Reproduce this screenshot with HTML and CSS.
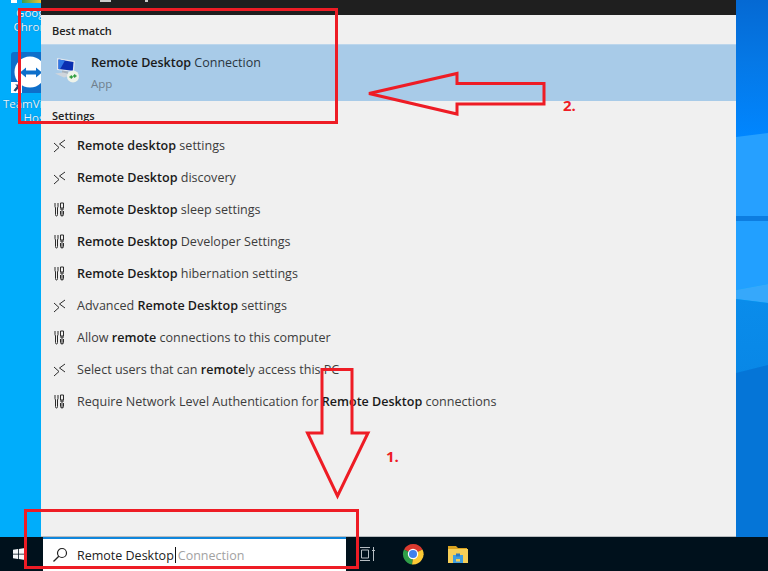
FILE: index.html
```html
<!DOCTYPE html>
<html lang="en">
<head>
<meta charset="utf-8">
<title>Remote Desktop search</title>
<link rel="stylesheet" href="styles.css">
</head>
<body>
<svg width="0" height="0" class="defs">
  <symbol id="ic-remote" viewBox="0 0 16 16">
    <path d="M2 6 L7 10.500 L2 15 M13 3 L7.500 7 L13 11" fill="none" stroke="#2b2b2b" stroke-width="1"/>
  </symbol>
  <symbol id="ic-tools" viewBox="0 0 16 16">
    <path d="M3 2 V5.500 L3.500 7 V13.500 Q3.500 15 4.500 15 Q5.500 15 5.500 13.500 V7 L6 5.500 V2" fill="none" stroke="#2b2b2b" stroke-width="1"/>
    <path d="M8.500 2 H11.500 V7 H8.500 Z M8 8 H12 M10 8 V15 M8.500 10 V13.500 Q8.500 15 10 15 Q11.500 15 11.500 13.500 V10" fill="none" stroke="#2b2b2b" stroke-width="1"/>
  </symbol>
</svg>

<div class="screen">
  <svg class="wallpaper" viewBox="0 0 768 571" preserveAspectRatio="none">
    <defs>
      <linearGradient id="wtop" x1="0" y1="0" x2="0" y2="1">
        <stop offset="0" stop-color="#0569d3"/>
        <stop offset="0.45" stop-color="#0578e6"/>
        <stop offset="1" stop-color="#0086ff"/>
      </linearGradient>
      <linearGradient id="wlow" x1="0" y1="0" x2="0" y2="1">
        <stop offset="0" stop-color="#0a8ceb"/>
        <stop offset="1" stop-color="#057ddc"/>
      </linearGradient>
    </defs>
    <rect width="768" height="571" fill="#00adfb"/>
    <rect x="736" width="32" height="137" fill="url(#wtop)"/>
    <polygon points="736,137 768,133 768,216 736,216" fill="#26a0ff"/>
    <rect x="736" y="216" width="32" height="5" fill="#0d7de0"/>
    <polygon points="736,221 768,221 768,284 736,290" fill="#22a0ff"/>
    <polygon points="736,290 768,284 768,303 736,299" fill="#36a8fb"/>
    <polygon points="736,299 768,303 768,537 736,537" fill="url(#wlow)"/>
    <polygon points="736,373 768,365 768,537 736,537" fill="#0575d7"/>
  </svg>

  <div class="desk-icon chrome-shortcut">
    <span class="chrome-tile"></span>
    <span class="chrome-sliver"></span>
    <span class="desk-label">Google<br>Chrome</span>
  </div>

  <div class="desk-icon tv-shortcut">
    <svg class="tv-icon" viewBox="0 0 40 41" width="40" height="41">
      <rect width="40" height="41" rx="3" fill="#0e6fca"/>
      <circle cx="19" cy="20" r="15.500" fill="#fff"/>
      <path d="M9 20.500 L15 15.500 V18.500 H25 V15.500 L31 20.500 L25 25.500 V22.500 H15 V25.500 Z" fill="#0e6fca"/>
      <rect x="0" y="30" width="11" height="11" fill="#fff"/>
      <path d="M2.500 38.500 L6 34 L4 32.500 H9.500 V38 L7.800 36 L4.500 39.500 Z" fill="#24456e"/>
    </svg>
    <span class="desk-label">TeamViewer<br>Host</span>
  </div>

  <main class="work">
    <section class="panel">
      <div class="panel-top">
        <span class="top-mark top-mark-a"></span>
        <span class="top-mark top-mark-b"></span>
      </div>
      <h2 class="heading heading-first">Best match</h2>
      <div class="best">
        <svg class="app-icon" viewBox="0 0 26 26" width="26" height="26">
          <polygon points="3,1 21,4 20,15 3,13" fill="#dfe6ee"/>
          <polygon points="4.500,2.500 19.500,5 18.800,13.800 4.500,12" fill="#0a2fb0"/>
          <polygon points="4.500,2.500 11,3.500 6,12.200 4.500,12" fill="#2f78e6"/>
          <polygon points="8,13.500 14,14.500 14,17 8,16" fill="#a9b3bd"/>
          <polygon points="1,16.500 9,15.500 18,18 10,20.500" fill="#cfd5dc"/>
          <circle cx="19" cy="19.500" r="6" fill="#eef3ea"/>
          <path d="M15.500 20 L18 20 M16.800 18.500 L18.300 20 L16.800 21.500 M22.500 19 L20 19 M21.200 17.500 L19.700 19 L21.200 20.500" fill="none" stroke="#2f9e3f" stroke-width="1.300"/>
        </svg>
        <div class="best-text">
          <div class="best-title"><b>Remote Desktop</b> Connection</div>
          <div class="best-sub">App</div>
        </div>
      </div>
      <h2 class="heading">Settings</h2>
      <ul class="results">
        <li class="row"><svg class="row-icon"><use href="#ic-remote"/></svg><span><b>Remote desktop</b> settings</span></li>
        <li class="row"><svg class="row-icon"><use href="#ic-remote"/></svg><span><b>Remote Desktop</b> discovery</span></li>
        <li class="row"><svg class="row-icon"><use href="#ic-tools"/></svg><span><b>Remote Desktop</b> sleep settings</span></li>
        <li class="row"><svg class="row-icon"><use href="#ic-tools"/></svg><span><b>Remote Desktop</b> Developer Settings</span></li>
        <li class="row"><svg class="row-icon"><use href="#ic-tools"/></svg><span><b>Remote Desktop</b> hibernation settings</span></li>
        <li class="row"><svg class="row-icon"><use href="#ic-remote"/></svg><span>Advanced <b>Remote Desktop</b> settings</span></li>
        <li class="row"><svg class="row-icon"><use href="#ic-tools"/></svg><span>Allow <b>remote</b> connections to this computer</span></li>
        <li class="row"><svg class="row-icon"><use href="#ic-remote"/></svg><span>Select users that can <b>remote</b>ly access this PC</span></li>
        <li class="row"><svg class="row-icon"><use href="#ic-tools"/></svg><span>Require Network Level Authentication for <b>Remote Desktop</b> connections</span></li>
      </ul>
    </section>
  </main>

  <footer class="taskbar">
    <div class="start">
      <svg viewBox="0 0 12 12" width="12" height="12">
        <path d="M0 1.700 L5 1 V5.700 H0 Z M5.800 .9 L12 0 V5.700 H5.800 Z M0 6.400 H5 V11 L0 10.300 Z M5.800 6.400 H12 V12 L5.800 11.100 Z" fill="#f4f6f8"/>
      </svg>
    </div>
    <div class="searchbox">
      <svg class="search-icon" viewBox="0 0 16 16" width="16" height="16">
        <circle cx="10" cy="6" r="4.500" fill="none" stroke="#222" stroke-width="1.200"/>
        <path d="M6.800 9.200 L1.500 14.500" stroke="#222" stroke-width="1.300"/>
      </svg>
      <span class="typed">Remote Desktop</span><span class="caret"></span><span class="hint">Connection</span>
    </div>
    <div class="tray-icons">
      <svg class="taskview" viewBox="0 0 16 14" width="16" height="14">
        <path d="M1 .5 H11 M1 13.500 H11 M2.500 3 H9.500 V11 H2.500 Z M14.500 0 V14 M13 3.500 H16" fill="none" stroke="#b6bdc2" stroke-width="1"/>
      </svg>
      <svg class="chrome" viewBox="0 0 22 22" width="22" height="22">
        <path d="M11 11 L2 6.500 A10.500 10.500 0 0 1 20.500 6.500 Z" fill="#db3a2f"/>
        <path d="M11 11 L20.500 6.500 A10.500 10.500 0 0 1 10 21.500 Z" fill="#fcc934"/>
        <path d="M11 11 L10 21.500 A10.500 10.500 0 0 1 2 6.500 Z" fill="#2f9e48"/>
        <circle cx="11" cy="11" r="5.200" fill="#fff"/>
        <circle cx="11" cy="11" r="4" fill="#3f80ee"/>
      </svg>
      <svg class="explorer" viewBox="0 0 20 18" width="20" height="18">
        <path d="M0 1 H8 L10 3 H19 V6 H0 Z" fill="#d9a21f"/>
        <rect y="4" width="20" height="14" fill="#f6cf57"/>
        <rect x="5" y="10" width="10" height="8" fill="#3f9ee0"/>
        <rect x="8" y="8.500" width="4" height="3" fill="#2f78c0"/>
        <rect x="8" y="14" width="4" height="2.500" fill="#f6cf57"/>
      </svg>
    </div>
  </footer>

  <svg class="annotations" viewBox="0 0 768 571">
    <g fill="none" stroke="#ee1c25" stroke-width="3">
      <rect x="19.500" y="9.500" width="317" height="113"/>
      <rect x="25.500" y="510.500" width="332" height="57"/>
      <polygon points="369,93.500 457,73.500 457,83.500 544,83.500 544,104 457,104 457,114"/>
      <polygon points="322,369.500 352,369.500 352,433 368,433 337.500,496 307.500,433 322,433"/>
    </g>
  </svg>
  <span class="note note-one">1.</span>
  <span class="note note-two">2.</span>
</div>
</body>
</html>
```

FILE: styles.css
```css
* { box-sizing: border-box; }
html, body { margin: 0; padding: 0; }
body { width: 768px; height: 571px; overflow: hidden; font-family: "Open Sans", "Noto Sans", sans-serif; }
.defs { position: absolute; }
.screen {
  position: relative;
  width: 768px;
  height: 571px;
  display: flex;
  flex-direction: column;
  overflow: hidden;
}
.wallpaper { position: absolute; left: 0; top: 0; width: 768px; height: 571px; }
.work {
  position: relative;
  height: 537px;
  padding-left: 41px;
  flex: none;
}
.panel {
  width: 695px;
  height: 537px;
  background: #f0f0f0;
  border-bottom: 1px solid #b8bcbf;
  color: #2b2b2b;
}
.panel-top {
  position: relative;
  height: 15px;
  background: #1f1f1f;
}
.top-mark { position: absolute; top: 0; height: 2px; background: #c9c9c9; }
.top-mark-a { left: 59px; width: 11px; }
.top-mark-b { left: 104px; width: 3px; }
.heading {
  margin: 0;
  height: 29px;
  padding: 0 0 0 11px;
  display: flex;
  align-items: center;
  font-size: 11px;
  font-weight: 600;
  color: #222;
}
.heading-first { padding-top: 2px; }
.best {
  height: 57px;
  background: #a8cbe8;
  border-top: 1px solid #bcd6ec;
  display: flex;
  align-items: center;
  padding: 0 0 2px 13px;
  gap: 11px;
}
.app-icon { flex: none; margin-top: -4px; }
.best-text { display: flex; flex-direction: column; gap: 5px; }
.best-title { font-size: 12.500px; line-height: 17px; color: #2a3640; }
.best-title b, .row b { font-weight: 600; color: #1a1a1a; }
.best-sub { font-size: 11.500px; line-height: 15px; color: #6f7f8d; }
.results { list-style: none; margin: 0; padding: 0; }
.row {
  height: 32px;
  display: flex;
  align-items: center;
  padding: 0 0 2px 11px;
  gap: 9px;
  font-size: 12.550px;
  color: #3c3c3c;
  white-space: nowrap;
}
.row-icon { width: 16px; height: 16px; flex: none; }
.taskbar {
  position: relative;
  height: 34px;
  background: #00111c;
  display: flex;
  flex: none;
}
.start {
  width: 43px;
  display: flex;
  align-items: center;
  justify-content: center;
  padding-right: 6px;
}
.searchbox {
  width: 303px;
  height: 34px;
  background: #fff;
  border-top: 2px solid #0f86dc;
  display: flex;
  align-items: center;
  padding-left: 9px;
  font-size: 12.500px;
}
.search-icon { margin-right: 9px; flex: none; }
.typed { color: #222; }
.caret { width: 1px; height: 16px; background: #111; margin: 0 2px 0 1px; }
.hint { color: #a2a2a2; }
.tray-icons { position: relative; flex: 1; display: flex; align-items: center; padding-left: 13px; }
.taskview { margin-right: 27px; }
.chrome { margin-right: 24px; }
.desk-icon { position: absolute; color: #e6f6ff; text-align: center; font-size: 11.500px; line-height: 14px; }
.desk-label { display: block; text-shadow: 0 0 1px rgba(0,40,90,.5); }
.chrome-shortcut { left: 0; top: -1px; width: 70px; }
.chrome-shortcut .desk-label { position: absolute; top: 7px; left: 0; width: 70px; }
.chrome-tile { position: absolute; left: 11px; top: 0; width: 6px; height: 4px; background: #fff; }
.chrome-sliver { position: absolute; left: 22px; top: 0; width: 19px; height: 4px; background: linear-gradient(90deg, #36a04d, #f2c132); }
.tv-shortcut { left: 0; top: 52px; width: 72px; }
.tv-icon { position: absolute; left: 11px; top: 0; }
.tv-shortcut .desk-label { position: absolute; top: 45px; left: 0; width: 72px; }
.annotations { position: absolute; left: 0; top: 0; width: 768px; height: 571px; pointer-events: none; }
.note { position: absolute; font-size: 15px; line-height: 18px; font-weight: 700; color: #ee1c25; }
.note-one { left: 386px; top: 447px; }
.note-two { left: 563px; top: 96px; }
```
